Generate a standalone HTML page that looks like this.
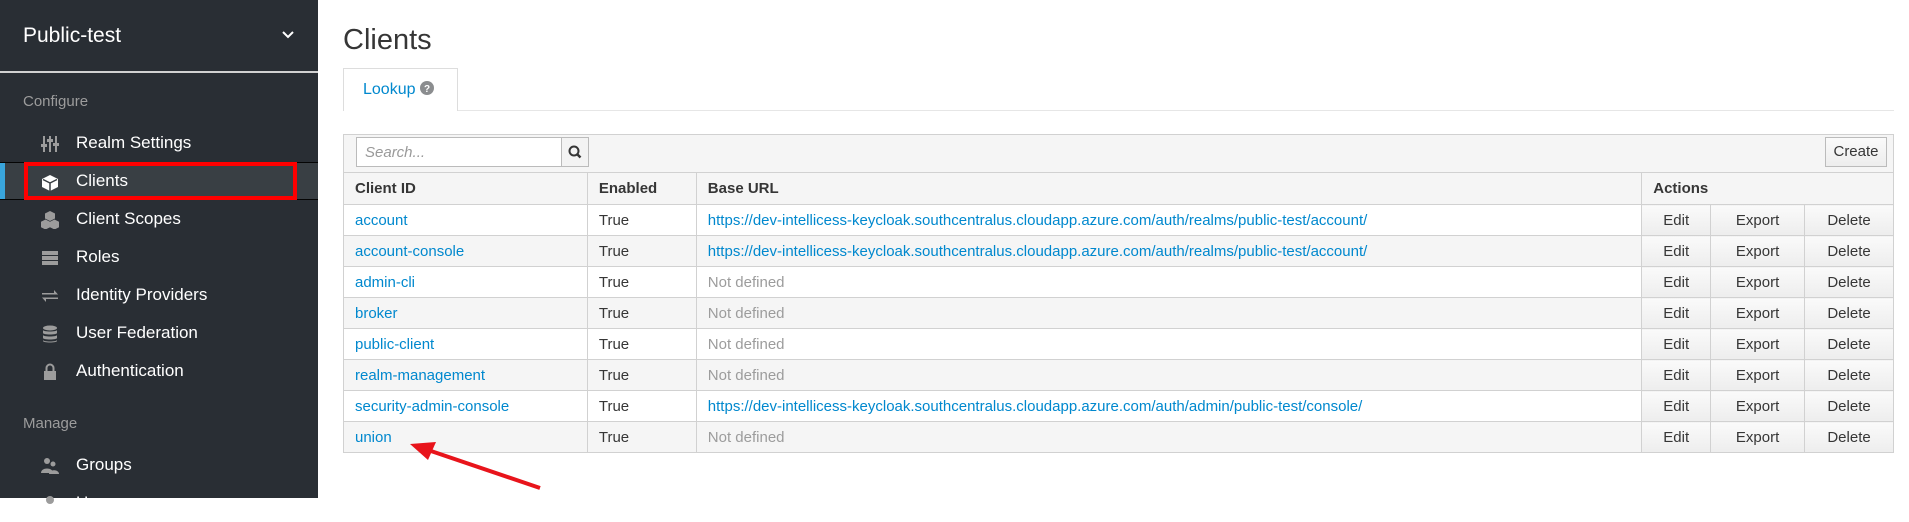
<!DOCTYPE html>
<html><head><meta charset="utf-8"><style>
*{box-sizing:border-box;margin:0;padding:0}
body{width:1909px;height:498px;overflow:hidden;font-family:"Liberation Sans",sans-serif;background:#fff;position:relative;color:#363636}
#sb{position:absolute;left:0;top:0;width:318px;height:498px;background:#292e34;color:#fff}
#sb .realm{position:absolute;left:23px;top:24px;font-size:21px;color:#fff}
#sb .chev{position:absolute;left:282px;top:30px}
#sb .div{position:absolute;left:0;top:71px;width:318px;height:2px;background:#d1d1d1}
.sec{position:absolute;left:23px;font-size:15px;color:#9c9c9c}
.it{position:absolute;left:0;width:318px;height:38px;font-size:17px;color:#fff;display:flex;align-items:center}
.it .ic{position:absolute;left:41px;top:11px;width:18px;height:18px}
.it span{position:absolute;left:76px}
.act{background:#393f44;border-top:1px solid #050505;border-bottom:1px solid #050505}
.act:before{content:"";position:absolute;left:0;top:0;width:5px;height:100%;background:#39a5dc}
#red{position:absolute;left:24px;top:162px;width:273px;height:38px;border:4px solid #f00}
h1{position:absolute;left:343px;top:24px;font-size:29px;font-weight:normal;color:#363636}
#tab{position:absolute;left:343px;top:68px;width:115px;height:43px;border:1px solid #ddd;border-bottom:none;background:#fff;color:#0088ce;font-size:16px;padding:12px 0 0 19px}
#tabline{position:absolute;left:458px;top:110px;width:1436px;height:1px;background:#e6e6e6}
#panel{position:absolute;left:343px;top:134px;width:1551px;height:319px;border:1px solid #d1d1d1;background:#f5f5f5}
#search{position:absolute;left:356px;top:137px;width:206px;height:30px;border:1px solid #bbb;background:#fff;font-size:15px;font-style:italic;color:#999;padding:6px 8px}
#sbtn{position:absolute;left:561px;top:137px;width:28px;height:30px;border:1px solid #bbb;background:#f3f3f3}
#create{position:absolute;left:1825px;top:137px;width:62px;height:30px;border:1px solid #bbb;background:linear-gradient(#fafafa,#ededed);font-size:15px;color:#363636;text-align:center;line-height:28px}
table{position:absolute;left:343px;top:172px;width:1551px;border-collapse:collapse;font-size:15px}
td,th{border:1px solid #d1d1d1;height:31px;padding:0 11px;text-align:left;white-space:nowrap}
th{background:#f5f5f5;font-weight:bold;height:32px}
tr.o td{background:#fff}tr.e td{background:#f5f5f5}
a{color:#0088ce;text-decoration:none}
.nd{color:#9c9c9c}
td.b{background:linear-gradient(#fafafa,#ededed)!important;text-align:center;padding:0}
</style></head><body>
<div id="sb">
<div class="realm">Public-test</div>
<svg class="chev" width="12" height="10" viewBox="0 0 12 10"><path d="M1 2l5 5 5-5" stroke="#fff" stroke-width="2" fill="none"/></svg>
<div class="div"></div>
<div class="sec" style="top:93px">Configure</div>
<div class="it" style="top:124px"><svg class="ic" viewBox="0 0 18 18"><g stroke="#9c9c9c" stroke-width="2"><path d="M3 1v16M9 1v16M15 1v16"/></g><g fill="#9c9c9c"><rect x="0" y="9" width="6" height="3"/><rect x="6" y="4" width="6" height="3"/><rect x="12" y="8" width="6" height="3"/></g></svg><span>Realm Settings</span></div>
<div class="it act" style="top:162px"><svg class="ic" viewBox="0 0 18 18"><path d="M9 1l8 4v8l-8 4-8-4V5z" fill="#fff"/><path d="M9 9l7-3.5M9 9v8M9 9L2 5.5" stroke="#393f44" stroke-width="1.5" fill="none"/></svg><span>Clients</span></div>
<div class="it" style="top:200px"><svg class="ic" viewBox="0 0 18 18" fill="#9c9c9c"><path d="M9 0l5 2.5v5L9 10 4 7.5v-5z"/><path d="M4.5 8.5l5 2.5v5l-5 2.5-5-2.5V11z"/><path d="M13.5 8.5l5 2.5v5l-5 2.5-5-2.5V11z"/></svg><span>Client Scopes</span></div>
<div class="it" style="top:238px"><svg class="ic" viewBox="0 0 18 18" fill="#9c9c9c"><rect x="1" y="2" width="16" height="4"/><rect x="1" y="7" width="16" height="4"/><rect x="1" y="12" width="16" height="4"/></svg><span>Roles</span></div>
<div class="it" style="top:276px"><svg class="ic" viewBox="0 0 18 18" fill="#9c9c9c"><path d="M1 6h12V3l4 4.5-4 0H1z"/><path d="M17 12H5v3l-4-4.5h16z"/></svg><span>Identity Providers</span></div>
<div class="it" style="top:314px"><svg class="ic" viewBox="0 0 18 18" fill="#9c9c9c"><ellipse cx="9" cy="3" rx="7" ry="2.5"/><path d="M2 5c0 2 14 2 14 0v3c0 2-14 2-14 0zM2 10c0 2 14 2 14 0v3c0 2-14 2-14 0zM2 15c0 2 14 2 14 0v1c0 2-14 2-14 0z"/></svg><span>User Federation</span></div>
<div class="it" style="top:352px"><svg class="ic" viewBox="0 0 18 18"><rect x="3" y="8" width="12" height="9" fill="#9c9c9c"/><path d="M5.5 8V5a3.5 3.5 0 017 0v3" stroke="#9c9c9c" stroke-width="2" fill="none"/></svg><span>Authentication</span></div>
<div class="sec" style="top:415px">Manage</div>
<div class="it" style="top:446px"><svg class="ic" viewBox="0 0 18 18" fill="#9c9c9c"><circle cx="6" cy="4" r="3"/><path d="M0 16c0-6 12-6 12 0z"/><circle cx="12" cy="7" r="2.5"/><path d="M8 17c0-5 10-5 10 0z"/></svg><span>Groups</span></div>
<div class="it" style="top:484px"><svg class="ic" viewBox="0 0 18 18" fill="#9c9c9c"><circle cx="9" cy="5" r="4"/></svg><span>Users</span></div>
</div>
<div id="red"></div>
<h1>Clients</h1>
<div id="tabline"></div>
<div id="tab">Lookup <svg width="14" height="14" viewBox="0 0 14 14" style="vertical-align:-1px"><circle cx="7" cy="7" r="7" fill="#8b8d8f"/><text x="7" y="11" font-size="10" font-weight="bold" fill="#fff" text-anchor="middle" font-family="Liberation Sans">?</text></svg></div>
<div id="panel"></div>
<div id="search">Search...</div>
<div id="sbtn"><svg width="26" height="28" viewBox="0 0 26 28"><circle cx="12" cy="13" r="4.5" stroke="#363636" stroke-width="2" fill="none"/><path d="M15 16l3.5 3.5" stroke="#363636" stroke-width="2.5"/></svg></div>
<div id="create">Create</div>
<table>
<colgroup><col style="width:244px"><col style="width:109px"><col style="width:946px"><col style="width:69px"><col style="width:94px"><col style="width:89px"></colgroup>
<tr><th>Client ID</th><th>Enabled</th><th>Base URL</th><th colspan="3">Actions</th></tr>
<tr class="o"><td><a>account</a></td><td>True</td><td><a>https://dev-intellicess-keycloak.southcentralus.cloudapp.azure.com/auth/realms/public-test/account/</a></td><td class="b">Edit</td><td class="b">Export</td><td class="b">Delete</td></tr>
<tr class="e"><td><a>account-console</a></td><td>True</td><td><a>https://dev-intellicess-keycloak.southcentralus.cloudapp.azure.com/auth/realms/public-test/account/</a></td><td class="b">Edit</td><td class="b">Export</td><td class="b">Delete</td></tr>
<tr class="o"><td><a>admin-cli</a></td><td>True</td><td class="nd">Not defined</td><td class="b">Edit</td><td class="b">Export</td><td class="b">Delete</td></tr>
<tr class="e"><td><a>broker</a></td><td>True</td><td class="nd">Not defined</td><td class="b">Edit</td><td class="b">Export</td><td class="b">Delete</td></tr>
<tr class="o"><td><a>public-client</a></td><td>True</td><td class="nd">Not defined</td><td class="b">Edit</td><td class="b">Export</td><td class="b">Delete</td></tr>
<tr class="e"><td><a>realm-management</a></td><td>True</td><td class="nd">Not defined</td><td class="b">Edit</td><td class="b">Export</td><td class="b">Delete</td></tr>
<tr class="o"><td><a>security-admin-console</a></td><td>True</td><td><a>https://dev-intellicess-keycloak.southcentralus.cloudapp.azure.com/auth/admin/public-test/console/</a></td><td class="b">Edit</td><td class="b">Export</td><td class="b">Delete</td></tr>
<tr class="e"><td><a>union</a></td><td>True</td><td class="nd">Not defined</td><td class="b">Edit</td><td class="b">Export</td><td class="b">Delete</td></tr>
</table>
<svg style="position:absolute;left:0;top:0" width="1909" height="498"><path d="M540 488L428 450" stroke="#e8141b" stroke-width="4"/><path d="M410 444l26-2-8 18z" fill="#e8141b"/></svg>
</body></html>
